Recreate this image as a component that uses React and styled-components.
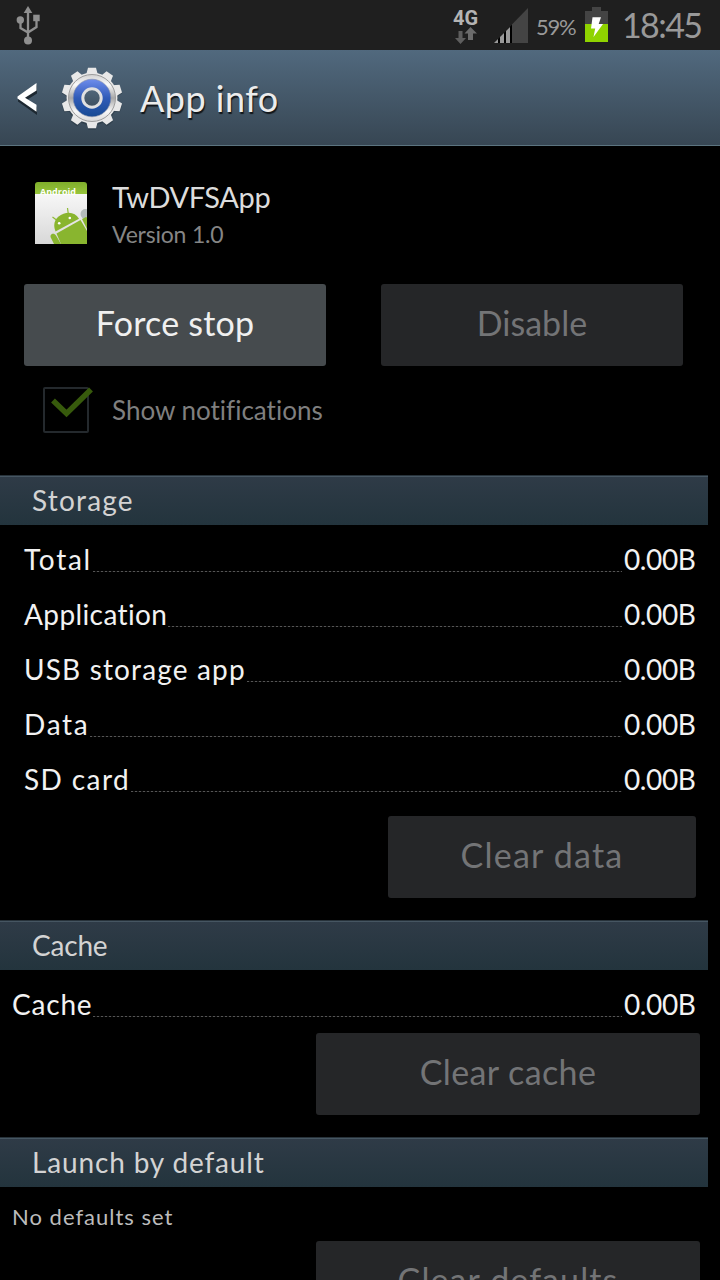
import React from "react";
import styled, { createGlobalStyle } from "styled-components";

const Global = createGlobalStyle`
  * { box-sizing: border-box; }
  html, body { margin: 0; background: #000; }
`;

const Screen = styled.div`
  width: 720px;
  height: 1280px;
  overflow: hidden;
  display: flex;
  flex-direction: column;
  background: #000;
  color: #f2f2f2;
  font-family: Lato, "Open Sans", sans-serif;
  font-variant-ligatures: none;
`;

const Label = styled.span`
  display: block;
  white-space: nowrap;
  font-size: ${(p) => p.$size}px;
  line-height: ${(p) => p.$line || p.$size}px;
  letter-spacing: ${(p) => p.$spacing || 0}px;
  color: ${(p) => p.$color || "inherit"};
`;

const StatusBar = styled.div`
  flex: none;
  height: 50px;
  display: flex;
  align-items: center;
  padding: 0 18px 0 16px;
  background: #1f1f1f;
`;

const StatusIcons = styled.div`
  margin-left: auto;
  display: flex;
  align-items: center;
  height: 50px;
`;

const Network = styled.div`
  width: 41px;
  padding-top: 2px;
  display: flex;
  flex-direction: column;
  align-items: flex-start;
  font-family: Roboto, sans-serif;
  font-weight: 700;
  svg { margin-left: 2px; }
`;

const Percent = styled.div`
  width: 56px;
  padding: 3px 0 0 7px;
`;

const Clock = styled.div`
  width: 94px;
  padding-left: 14px;
`;

const ActionBar = styled.header`
  flex: none;
  height: 96px;
  display: flex;
  align-items: center;
  padding-left: 16px;
  background: linear-gradient(#51697e, #374653);
  border-bottom: 1px solid #5c7480;
`;

const Title = styled.h1`
  margin: 0 0 0 17px;
  font-weight: 400;
  color: #ececec;
  text-shadow: 1px 2px 1px rgba(0, 0, 0, 0.75);
`;

const BackIcon = styled.svg`
  margin-right: 21px;
`;

const AppHeader = styled.div`
  flex: none;
  display: flex;
  height: 138px;
  padding: 36px 0 0 35px;
`;

const AppText = styled.div`
  margin-left: 25px;
  display: flex;
  flex-direction: column;
`;

const Actions = styled.div`
  flex: none;
  display: flex;
  justify-content: ${(p) => (p.$end ? "flex-end" : "flex-start")};
  gap: 55px;
  padding: 0 ${(p) => p.$right || 24}px 0 24px;
  margin-bottom: ${(p) => p.$below || 0}px;
`;

const Button = styled.button`
  flex: none;
  width: ${(p) => p.$width}px;
  height: 82px;
  display: flex;
  align-items: center;
  justify-content: center;
  padding: 0 0 5px;
  border: 0;
  border-radius: 3px;
  font-family: inherit;
  background: ${(p) => (p.disabled ? "#252628" : "#464b4e")};
  color: ${(p) => (p.disabled ? "#737476" : "#f0f0f0")};
`;

const CheckRow = styled.label`
  flex: none;
  height: 89px;
  display: flex;
  align-items: flex-start;
  gap: 15px;
  padding-left: 43px;
`;

const SectionHeader = styled.h2`
  flex: none;
  width: 708px;
  height: 50px;
  margin: 0;
  padding-left: 32px;
  font-weight: 400;
  color: #d3d3d3;
  background: linear-gradient(#2f3b47, #23343d);
  border-top: 1px solid #27323a;
  box-shadow: inset 0 1px #465662;
`;

const Rows = styled.div`
  flex: none;
  padding: 7px 24px ${(p) => p.$below}px ${(p) => p.$left}px;
`;

const Row = styled.div`
  height: 55px;
  display: flex;
  align-items: flex-start;
  padding-top: 7px;
`;

const Leader = styled.div`
  flex: 1;
  height: 1px;
  margin: 32px 2px 0 1px;
  background: repeating-linear-gradient(90deg, #555 0 2px, #111 2px 4px);
`;

const Value = styled.div`
  width: 72px;
`;

const Note = styled.p`
  flex: none;
  height: 54px;
  margin: 0;
  padding: 17px 0 0 12px;
`;

const UsbIcon = () => (
  <svg width="26" height="40" viewBox="0 0 26 40" fill="none" stroke="#8f8f8f" strokeWidth="2.3">
    <path d="M12 7V34M4.5 15v8l7.5 4.5M20.5 12v10L12 27.5" />
    <path d="M12 1l4.3 7H7.7z" fill="#8f8f8f" stroke="none" />
    <circle cx="4.3" cy="15" r="3.7" fill="#8f8f8f" stroke="none" />
    <path d="M17.2 9.7h6.5v6.5h-6.5z" fill="#8f8f8f" stroke="none" />
    <circle cx="12" cy="35.5" r="4" fill="#8f8f8f" stroke="none" />
  </svg>
);

const DataArrows = () => (
  <svg width="23" height="17" viewBox="0 0 23 17">
    <path d="M3.500 4h4v7H11l-5.500 6L0 11h3.500z" fill="#5e5e5e" />
    <path d="M13 13V6.500H9.500L15.500 0 22 6.500h-4V13z" fill="#6c6c6c" />
  </svg>
);

const SignalIcon = () => (
  <svg width="35" height="35" viewBox="0 0 35 35">
    <path d="M0 35L34 0V35z" fill="#444" />
    <path d="M0 35L18 16.500V35z" fill="#000" />
    <path d="M0 35l4-4v4zM6 35v-6l4-4v10zM12 35V23l4-4v16z" fill="#999" />
  </svg>
);

const BatteryIcon = () => (
  <svg width="23" height="36" viewBox="0 0 23 36">
    <path d="M7 0h9v4h7v31H0V4h7z" fill="#444" />
    <path d="M0 17h23v18H0z" fill="#8fd300" />
    <path d="M7.500 10.300h8.500l-2.300 6.700H18L8.500 30l1.700-8.500H6z" fill="#fff" />
  </svg>
);

const TEETH = [0, 36, 72, 108, 144, 180, 216, 252, 288, 324];

const GearIcon = () => (
  <svg width="62" height="64" viewBox="-31 -32 62 64">
    <defs>
      <linearGradient id="metal" x1="0" y1="0" x2="0" y2="1">
        <stop offset="0" stopColor="#d2d2d2" />
        <stop offset=".22" stopColor="#fafafa" />
        <stop offset=".5" stopColor="#a8a8a8" />
        <stop offset=".78" stopColor="#f8f8f8" />
        <stop offset="1" stopColor="#d8d8d8" />
      </linearGradient>
      <linearGradient id="blue" x1="0" y1="0" x2="0" y2="1">
        <stop offset="0" stopColor="#6f8dec" />
        <stop offset=".5" stopColor="#2f5bb8" />
        <stop offset="1" stopColor="#174a93" />
      </linearGradient>
      <linearGradient id="hub" x1="0" y1="0" x2="0" y2="1">
        <stop offset="0" stopColor="#51677b" />
        <stop offset="1" stopColor="#3e5060" />
      </linearGradient>
    </defs>
    <g fill="#26343f" opacity=".55" transform="translate(0 1.300)">
      {TEETH.map((a) => (
        <path key={a} d="M-5.200-23L-3.700-30.500H3.700L5.200-23z" transform={`rotate(${a})`} />
      ))}
      <circle r="26" />
    </g>
    <g fill="#e8e8e8">
      {TEETH.map((a) => (
        <path key={a} d="M-5.900-23L-4-30.300H4L5.900-23z" transform={`rotate(${a})`} />
      ))}
    </g>
    <circle r="25.500" fill="#e8e8e8" />
    <circle r="23.500" fill="url(#metal)" stroke="#9c9c9c" strokeWidth="1" />
    <circle r="18.800" fill="url(#blue)" stroke="#7f8ca8" strokeWidth=".6" />
    <circle r="9.200" fill="url(#hub)" stroke="#e0e0e0" strokeWidth="3" />
  </svg>
);

const AndroidTile = styled.div`
  position: relative;
  width: 52px;
  height: 62px;
  border-radius: 3px 3px 0 0;
  background: linear-gradient(#7fae2b 0, #97c53c 12px, #f7f7f7 12px, #d8d8d8);
  svg { position: absolute; left: 0; top: 0; }
`;

const TileName = styled.div`
  padding: 5px 0 0 5px;
  color: #fff;
  font: 700 9px/10px "Open Sans", sans-serif;
`;

const AndroidIcon = () => (
  <AndroidTile>
    <TileName>Android</TileName>
    <svg width="52" height="62" viewBox="0 0 52 62">
      <circle cx="50.500" cy="32" r="5" fill="#b5bcbc" />
      <path d="M21.500 38l-4-3M33.300 32l-.8-6" stroke="#8ebb35" strokeWidth="1.200" />
      <path d="M20.500 49.500C17 41 21 34.500 28.500 31.800C35 29.500 41 31.500 44 36.800z" fill="#89b52f" />
      <path d="M21.500 51.500L45.500 38L52 49V62H26z" fill="#89b52f" />
      <path d="M47 37l4-2 1 .5V47z" fill="#89b52f" />
      <path d="M16 56c-2-4 3-6 5-2.500L26 62h-7z" fill="#89b52f" />
      <circle cx="24.200" cy="41.200" r="1.300" fill="#fff" />
      <circle cx="34.800" cy="36" r="1.300" fill="#fff" />
    </svg>
  </AndroidTile>
);

const CheckIcon = () => (
  <svg width="54" height="48" viewBox="0 0 54 48" fill="none">
    <rect x="1" y="2" width="44" height="44" rx="1" stroke="#24292d" strokeWidth="2" />
    <path d="M10 14.500L23.500 27.500L48 3.500" stroke="#375a0c" strokeWidth="5.500" />
  </svg>
);

const StorageRow = ({ name, spacing }) => (
  <Row>
    <Label $size={28} $line={40} $spacing={spacing}>{name}</Label>
    <Leader />
    <Value>
      <Label $size={28} $line={40} $spacing={-0.4}>0.00B</Label>
    </Value>
  </Row>
);

const Section = ({ children, spacing }) => (
  <SectionHeader>
    <Label $size={28} $line={48} $spacing={spacing}>{children}</Label>
  </SectionHeader>
);

export default function App() {
  return (
    <>
      <Global />
      <Screen>
        <StatusBar>
          <UsbIcon />
          <StatusIcons>
            <Network>
              <Label $size={20} $line={18} $color="#b4b4b4">4G</Label>
              <DataArrows />
            </Network>
            <SignalIcon />
            <Percent><Label $size={22} $spacing={-1.2} $color="#999">59%</Label></Percent>
            <BatteryIcon />
            <Clock><Label $size={34} $spacing={-1.6} $color="#999">18:45</Label></Clock>
          </StatusIcons>
        </StatusBar>
        <ActionBar>
          <BackIcon width="24" height="34" viewBox="0 0 24 34">
            <path d="M21 4v8.500L10 19.500l11 7V34L2 20.500v-2z" fill="#1d2831" />
            <path d="M20.500 2v7.500L9 16.800l11.500 7v7L1.500 17.500V15.500z" fill="#fff" />
          </BackIcon>
          <GearIcon />
          <Title><Label $size={36} $line={96} $spacing={0.5}>App info</Label></Title>
        </ActionBar>
        <AppHeader>
          <AndroidIcon />
          <AppText>
            <Label $size={29} $line={29} $spacing={-0.35} $color="#dcdcdc">TwDVFSApp</Label>
            <Label $size={23} $line={46} $spacing={-0.2} $color="#858585">Version 1.0</Label>
          </AppText>
        </AppHeader>
        <Actions $below={20}>
          <Button $width={302}><Label $size={34} $spacing={0.2}>Force stop</Label></Button>
          <Button $width={302} disabled><Label $size={34}>Disable</Label></Button>
        </Actions>
        <CheckRow>
          <CheckIcon />
          <Label $size={26} $line={48} $color="#7f7f7f">Show notifications</Label>
        </CheckRow>
        <Section spacing={1.2}>Storage</Section>
        <Rows $left={24} $below={9}>
          <StorageRow name="Total" spacing={1.7} />
          <StorageRow name="Application" spacing={0.4} />
          <StorageRow name="USB storage app" spacing={1.15} />
          <StorageRow name="Data" spacing={1.7} />
          <StorageRow name="SD card" spacing={1.4} />
        </Rows>
        <Actions $end $below={22}>
          <Button $width={308} disabled><Label $size={34} $spacing={1.2}>Clear data</Label></Button>
        </Actions>
        <Section spacing={-0.2}>Cache</Section>
        <Rows $left={12} $below={1}>
          <StorageRow name="Cache" spacing={0.8} />
        </Rows>
        <Actions $end $right={20} $below={22}>
          <Button $width={384} disabled><Label $size={34} $spacing={0.4}>Clear cache</Label></Button>
        </Actions>
        <Section spacing={0.85}>Launch by default</Section>
        <Note><Label $size={22} $line={26} $spacing={1} $color="#bcbcbc">No defaults set</Label></Note>
        <Actions $end $right={20}>
          <Button $width={384} disabled><Label $size={34} $spacing={1.1}>Clear defaults</Label></Button>
        </Actions>
      </Screen>
    </>
  );
}
